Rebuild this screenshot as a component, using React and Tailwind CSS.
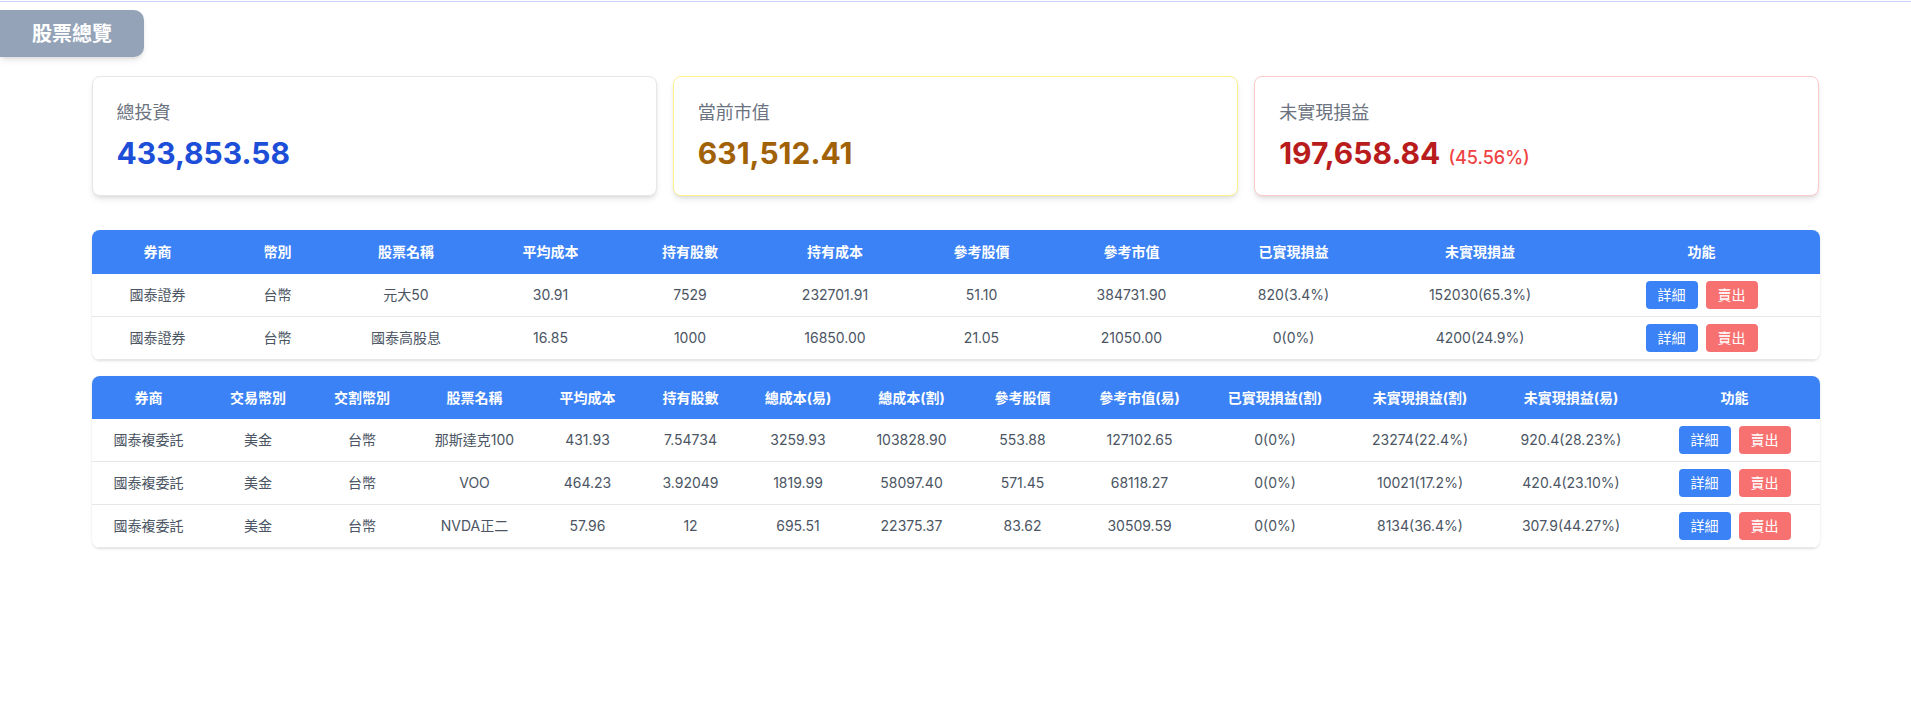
import React from 'react';

const summary = [
  { label: '總投資', value: '433,853.58', border: 'border-[#e5e7eb]', color: 'text-[#1d4ed8]' },
  { label: '當前市值', value: '631,512.41', border: 'border-[#fef08a]', color: 'text-[#a16207]' },
  { label: '未實現損益', value: '197,658.84', border: 'border-[#fecaca]', color: 'text-[#b91c1c]', pct: '(45.56%)' },
];

const twHeaders = ['券商', '幣別', '股票名稱', '平均成本', '持有股數', '持有成本', '參考股價', '參考市值', '已實現損益', '未實現損益', '功能'];
const twRows = [
  ['國泰證券', '台幣', '元大50', '30.91', '7529', '232701.91', '51.10', '384731.90', '820(3.4%)', '152030(65.3%)'],
  ['國泰證券', '台幣', '國泰高股息', '16.85', '1000', '16850.00', '21.05', '21050.00', '0(0%)', '4200(24.9%)'],
];

const usHeaders = ['券商', '交易幣別', '交割幣別', '股票名稱', '平均成本', '持有股數', '總成本(易)', '總成本(割)', '參考股價', '參考市值(易)', '已實現損益(割)', '未實現損益(割)', '未實現損益(易)', '功能'];
const usRows = [
  ['國泰複委託', '美金', '台幣', '那斯達克100', '431.93', '7.54734', '3259.93', '103828.90', '553.88', '127102.65', '0(0%)', '23274(22.4%)', '920.4(28.23%)'],
  ['國泰複委託', '美金', '台幣', 'VOO', '464.23', '3.92049', '1819.99', '58097.40', '571.45', '68118.27', '0(0%)', '10021(17.2%)', '420.4(23.10%)'],
  ['國泰複委託', '美金', '台幣', 'NVDA正二', '57.96', '12', '695.51', '22375.37', '83.62', '30509.59', '0(0%)', '8134(36.4%)', '307.9(44.27%)'],
];

const Actions = () => (
  <div className="flex items-center justify-center gap-2">
    <button className="h-7 px-3 rounded bg-[#3b82f6] text-white text-sm">詳細</button>
    <button className="h-7 px-3 rounded bg-[#f87171] text-white text-sm">賣出</button>
  </div>
);

const HoldingTable = ({ headers, rows, cols, headH }) => (
  <div className="rounded-lg overflow-hidden shadow-sm bg-white">
    <div className={`grid ${cols} ${headH} items-center bg-[#3b82f6] text-white text-sm font-bold`}>
      {headers.map((h) => (
        <div key={h} className="text-center">{h}</div>
      ))}
    </div>
    {rows.map((row, idx) => (
      <div key={idx} className={`grid ${cols} h-[43px] items-center border-b border-[#e5e7eb] text-sm text-[#4b5563]`}>
        {row.map((cell, i) => (
          <div key={i} className="text-center">{cell}</div>
        ))}
        <Actions />
      </div>
    ))}
  </div>
);

const App = () => {
  return (
    <div className="min-h-screen bg-white font-['Inter','Noto_Sans_CJK_TC',sans-serif]">
      <div className="pt-px">
        <div className="h-px bg-[#c7d2fe]"></div>
      </div>

      {/* page title tab */}
      <div className="mt-2 inline-flex h-[47px] items-center px-8 bg-[#94a3b8] rounded-r-[10px] shadow-md">
        <span className="text-xl font-bold text-white">股票總覽</span>
      </div>

      <div className="w-[1728px] mx-auto">
        {/* summary cards */}
        <div className="mt-[19px] grid grid-cols-3 gap-4">
          {summary.map((s) => (
            <div key={s.label} className={`bg-white border ${s.border} rounded-lg shadow-md px-6 pt-[22px] pb-[23px]`}>
              <div className="text-lg text-[#6b7280]">{s.label}</div>
              <div className="mt-2 flex items-baseline">
                <span className={`text-3xl font-bold ${s.color}`}>{s.value}</span>
                {s.pct && <span className="ml-2 text-lg font-medium text-[#ef4444]">{s.pct}</span>}
              </div>
            </div>
          ))}
        </div>

        {/* taiwan stocks */}
        <div className="mt-[34px]">
          <HoldingTable
            headers={twHeaders}
            rows={twRows}
            headH="h-[44px]"
            cols="grid-cols-[132px_108px_149px_140px_139px_151px_142px_158px_166px_207px_236px]"
          />
        </div>

        {/* foreign stocks */}
        <div className="mt-4">
          <HoldingTable
            headers={usHeaders}
            rows={usRows}
            headH="h-[43px]"
            cols="grid-cols-[114px_105px_103px_122px_104px_102px_113px_114px_108px_126px_145px_145px_157px_170px]"
          />
        </div>
      </div>
    </div>
  );
};

export default App;
